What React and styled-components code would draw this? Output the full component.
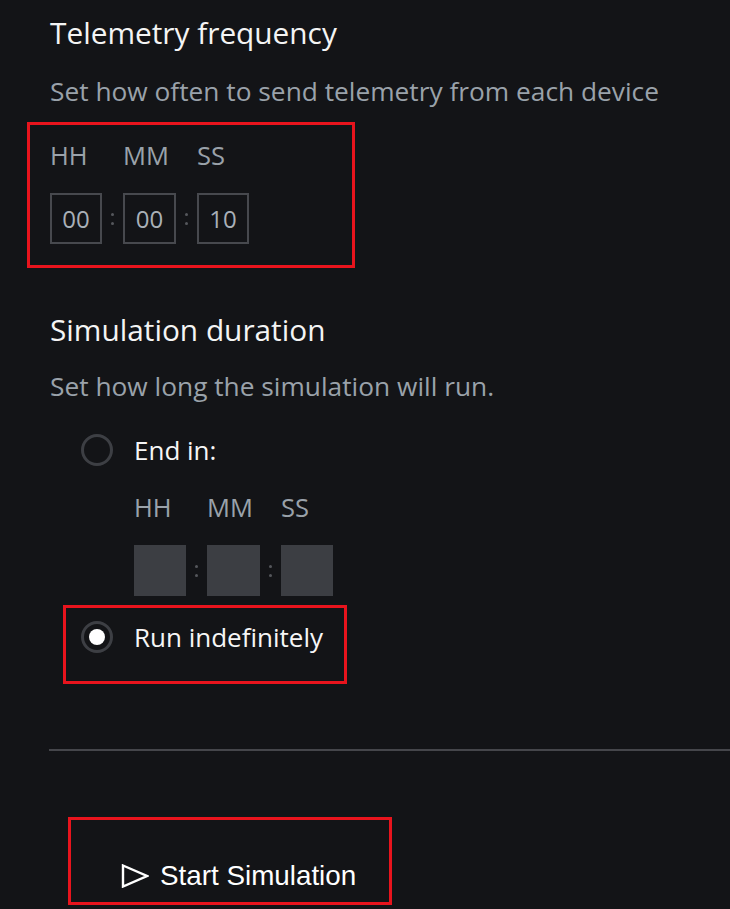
import React from 'react';
import styled, { createGlobalStyle } from 'styled-components';

const GlobalStyle = createGlobalStyle`
  body {
    margin: 0;
    background: #131417;
    font-family: "Open Sans", "Noto Sans", sans-serif;
    color: #f4f4f4;
  }
`;

const Page = styled.div`
  box-sizing: border-box;
  min-height: 909px;
  padding: 14px 0 0 50px;
  overflow: hidden;
`;

const Title = styled.h2`
  margin: ${(p) => p.$top || 0}px 0 0;
  font-size: 29.8px;
  line-height: 38px;
  font-weight: 400;
  color: #f4f4f4;
  white-space: nowrap;
`;

const Desc = styled.p`
  margin: ${(p) => p.$top || 0}px 0 0;
  font-size: 26.3px;
  line-height: 32px;
  color: #9aa2aa;
  white-space: nowrap;
`;

const Marked = styled.div`
  box-sizing: border-box;
  border: 3px solid #e8141d;
  margin: ${(p) => p.$top}px 0 0 ${(p) => p.$left}px;
  width: ${(p) => p.$w}px;
  height: ${(p) => p.$h}px;
  padding: ${(p) => p.$pad};
`;

const TimeGrid = styled.div`
  display: grid;
  grid-template-columns: 52px 21px 53px 21px 52px;
  grid-template-rows: 30px 51px;
  row-gap: 23px;
  margin-left: ${(p) => p.$indent || 0}px;
  margin-top: ${(p) => p.$top || 0}px;
`;

const Unit = styled.span`
  font-size: 25.5px;
  line-height: 30px;
  color: #9aa2aa;
  grid-column: ${(p) => p.$col};
  white-space: nowrap;
`;

const TimeInput = styled.div`
  box-sizing: border-box;
  border: 2px solid ${(p) => (p.$disabled ? '#3c3e43' : '#47494e')};
  background: ${(p) => (p.$disabled ? '#3c3e43' : 'transparent')};
  display: flex;
  align-items: center;
  justify-content: center;
  font-size: 24px;
  color: #a9b0b7;
`;

const Colon = styled.div`
  display: flex;
  flex-direction: column;
  align-items: center;
  justify-content: center;
  gap: 6px;

  &::before,
  &::after {
    content: '';
    width: 3px;
    height: 3px;
    border-radius: 50%;
    background: #55575c;
  }
`;

const RadioRow = styled.div`
  display: flex;
  align-items: center;
  height: 40px;
  gap: 21px;
  margin: ${(p) => p.$top || 0}px 0 0 ${(p) => p.$indent || 0}px;
  font-size: 26px;
  color: #f6f6f6;
  white-space: nowrap;
`;

const RadioCircle = styled.span`
  box-sizing: border-box;
  flex: none;
  width: 32px;
  height: 32px;
  border-radius: 50%;
  border: 3px solid #3d3f44;
  display: flex;
  align-items: center;
  justify-content: center;

  &::after {
    content: '';
    display: ${(p) => (p.$checked ? 'block' : 'none')};
    width: 16px;
    height: 16px;
    border-radius: 50%;
    background: #ffffff;
  }
`;

const Divider = styled.hr`
  margin: 65px 0 0 -1px;
  border: 0;
  height: 2px;
  background: #45464b;
`;

const StartButton = styled.button`
  display: flex;
  align-items: center;
  gap: 11px;
  padding: 0;
  border: 0;
  background: none;
  color: #ffffff;
  font-family: "Liberation Sans", Arial, sans-serif;
  font-size: 27.8px;
  line-height: 30px;
  white-space: nowrap;
  cursor: pointer;
`;

const PlayIcon = () => (
  <svg width="28" height="24" viewBox="0 0 28 24">
    <polygon points="2,1.5 26,12 2,22.5" fill="none" stroke="#fff" strokeWidth="2.4" strokeLinejoin="miter" />
  </svg>
);

const TimeFields = ({ values, disabled, indent, top }) => (
  <TimeGrid $indent={indent} $top={top}>
    <Unit $col={1}>HH</Unit>
    <Unit $col={3}>MM</Unit>
    <Unit $col={5}>SS</Unit>
    <TimeInput $disabled={disabled}>{values[0]}</TimeInput>
    <Colon />
    <TimeInput $disabled={disabled}>{values[1]}</TimeInput>
    <Colon />
    <TimeInput $disabled={disabled}>{values[2]}</TimeInput>
  </TimeGrid>
);

export default function App() {
  return (
    <>
      <GlobalStyle />
      <Page>
        <Title>Telemetry frequency</Title>
        <Desc $top={23}>Set how often to send telemetry from each device</Desc>
        <Marked $top={15} $left={-23} $w={328} $h={146} $pad="15px 0 0 20px">
          <TimeFields values={['00', '00', '10']} />
        </Marked>

        <Title $top={43}>Simulation duration</Title>
        <Desc $top={21}>Set how long the simulation will run.</Desc>
        <RadioRow $top={28} $indent={31}>
          <RadioCircle />
          End in:
        </RadioRow>
        <TimeFields values={['', '', '']} disabled indent={84} top={22} />
        <Marked $top={9} $left={13} $w={284} $h={79} $pad="9px 0 0 15px">
          <RadioRow>
            <RadioCircle $checked />
            Run indefinitely
          </RadioRow>
        </Marked>

        <Divider />

        <Marked $top={66} $left={18} $w={324} $h={88} $pad="41px 0 0 50px">
          <StartButton>
            <PlayIcon />
            Start Simulation
          </StartButton>
        </Marked>
      </Page>
    </>
  );
}
